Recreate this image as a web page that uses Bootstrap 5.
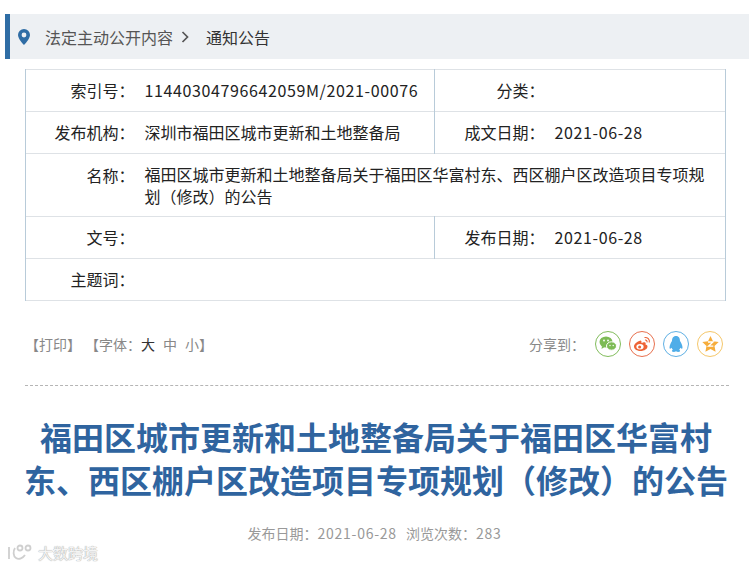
<!DOCTYPE html>
<html lang="zh-CN">
<head>
<meta charset="utf-8">
<title>通知公告</title>
<link rel="stylesheet" href="https://cdn.jsdelivr.net/npm/bootstrap@5.3.0/dist/css/bootstrap.min.css">
<style>
html,body{height:568px;overflow:hidden}
body{font-family:"Microsoft YaHei","Noto Sans CJK SC","Liberation Sans",sans-serif;background:#fff;color:#333;padding-top:14px;position:relative}
.crumb-bar{margin-left:5px;height:45px;background:#edf0f3;border-left:5px solid #2f6da5;padding-left:8px;font-size:16px;color:#555}
.crumb-bar svg{flex:none}
.crumb-now{color:#333;margin-left:9px}
.crumb-pin{margin-right:15px}
.meta-wrap{margin:10px 24px 0 25px}
.meta-table{margin:0;table-layout:fixed;width:700px;font-size:16px;line-height:22px;color:#222}
.meta-table td{padding:0 0 2px;vertical-align:middle;border-color:#b8cbd9}
.meta-table tr{height:42px}
.meta-table tr.tall{height:63px}
.meta-table td.cell-lab{padding-right:10px;text-align:right;border-right-width:0}
.meta-table td.cell-val{border-left-width:0;padding-left:0}
.meta-table td.cell-mid{border-left:1px solid #b8cbd9}
.meta-table td.top-lab{vertical-align:top;padding-top:10px}
.meta-table td.cell-long{padding-right:18px;padding-bottom:0}
.latin{letter-spacing:.62px}
.tools{margin:30px 26px 0 25px;height:26px;font-size:14px;color:#888}
.tools .cur{color:#333}
.tool-gap{margin-left:11px}
.size-opt{margin-left:8px}
.share-list{gap:8px;margin-left:10px}
.share-btn{width:26px;height:26px;border-radius:50%;border:1px solid;background:#fff}
.rule{margin:28px 20px 0 25px;border-top:1px dashed #b5b5b5}
.doc-title{margin:29px 21px 0 24px;font-size:32px;line-height:43px;font-weight:700;color:#2f649f;text-align:center}
.doc-info{margin-top:21px;font-size:14px;line-height:22px;color:#999;text-align:center}
.doc-info .latin{letter-spacing:.75px}
.info-gap{margin-left:9px}
.wm{position:absolute;left:7px;top:544px;font-size:15px;line-height:18px;color:#f4f4f4;text-shadow:0 0 1px #aaa,0 0 1px #aaa}
.wm svg{margin-right:5px}
</style>
</head>
<body>
<div class="crumb-bar d-flex align-items-center">
  <svg width="12" height="16" viewBox="0 0 12 16" class="crumb-pin"><path fill="#2f6da5" fill-rule="evenodd" d="M6 0a6 6 0 0 0-6 6c0 4 6 10 6 10s6-6 6-10a6 6 0 0 0-6-6Zm0 3.600a2.400 2.400 0 1 1 0 4.800 2.400 2.400 0 0 1 0-4.800Z"/></svg>
  <span>法定主动公开内容</span>
  <svg width="8" height="12" viewBox="0 0 8 12" class="mx-2"><path d="M1.500 1l5 5-5 5" fill="none" stroke="#555" stroke-width="1.700"/></svg>
  <span class="crumb-now">通知公告</span>
</div>
<div class="meta-wrap">
<table class="table table-bordered meta-table">
  <colgroup><col style="width:119px"><col style="width:290px"><col style="width:120px"><col style="width:171px"></colgroup>
  <tr><td class="cell-lab">索引号：</td><td class="cell-val"><span class="latin">11440304796642059M/2021-00076</span></td><td class="cell-lab cell-mid">分类：</td><td class="cell-val"></td></tr>
  <tr><td class="cell-lab">发布机构：</td><td class="cell-val">深圳市福田区城市更新和土地整备局</td><td class="cell-lab cell-mid">成文日期：</td><td class="cell-val"><span class="latin">2021-06-28</span></td></tr>
  <tr class="tall"><td class="cell-lab top-lab">名称：</td><td colspan="3" class="cell-val cell-long">福田区城市更新和土地整备局关于福田区华富村东、西区棚户区改造项目专项规划（修改）的公告</td></tr>
  <tr><td class="cell-lab">文号：</td><td class="cell-val"></td><td class="cell-lab cell-mid">发布日期：</td><td class="cell-val"><span class="latin">2021-06-28</span></td></tr>
  <tr><td class="cell-lab">主题词：</td><td colspan="3" class="cell-val"></td></tr>
</table>
</div>
<div class="tools d-flex align-items-center justify-content-between">
  <div>【打印】<span class="tool-gap">【字体：</span><span class="cur">大</span><span class="size-opt">中</span><span class="size-opt">小</span>】</div>
  <div class="d-flex align-items-center">
    <span>分享到：</span>
    <div class="d-flex share-list">
      <span class="share-btn d-flex align-items-center justify-content-center" style="border-color:#82bd5c"><svg width="18" height="16" viewBox="0 0 18 16"><ellipse cx="7" cy="6" rx="6.500" ry="5.500" fill="#7dbb55"/><path d="M3 10l-.5 3 3-2z" fill="#7dbb55"/><ellipse cx="12.500" cy="10" rx="5" ry="4.200" fill="#7dbb55" stroke="#fff"/><circle cx="5" cy="4.500" r=".9" fill="#fff"/><circle cx="9" cy="4.500" r=".9" fill="#fff"/><circle cx="11" cy="9.500" r=".7" fill="#fff"/><circle cx="14.200" cy="9.500" r=".7" fill="#fff"/></svg></span>
      <span class="share-btn d-flex align-items-center justify-content-center" style="border-color:#e8704e"><svg width="18" height="16" viewBox="0 0 18 16"><path d="M7.500 4.500C4 5.500 1 8 1 10.500 1 13.500 4.500 15 7.500 15c4 0 7-2.300 7-4.500 0-1.500-1.500-1.800-2-2 .5-1.300.2-3-2.500-2-1 .3-1.500.6-1.500.6s.3-2.800-1-2.600Z" fill="#ee6336"/><ellipse cx="7" cy="10.800" rx="3.600" ry="2.700" fill="#fff"/><circle cx="6.600" cy="11" r="1.500" fill="#ee6336"/><path d="M11.500 1.500c3-.5 5.500 2 4.800 5M12 4c1.500-.2 2.300 1 2 2.300" fill="none" stroke="#ee6336" stroke-width="1.100"/></svg></span>
      <span class="share-btn d-flex align-items-center justify-content-center" style="border-color:#5fb0e4"><svg width="14" height="17" viewBox="0 0 14 17"><path d="M7 0C4 0 3 2.500 3 5 2 6.500.5 9 .5 11.500c0 1.500.8 1.500 2 .3.3.8.8 1.400 1.300 1.900C2.800 14.200 2.500 15 3.500 15.800c1.300.4 2.700 0 3.500-.6.800.6 2.200 1 3.500.6 1-.8.700-1.600-.3-2.100.5-.5 1-1.100 1.300-1.900 1.200 1.200 2 1.200 2-.3C13.500 9 12 6.500 11 5c0-2.500-1-5-4-5Z" fill="#4fade8"/></svg></span>
      <span class="share-btn d-flex align-items-center justify-content-center" style="border-color:#f5c76a"><svg width="17" height="16" viewBox="0 0 17 16"><path d="M8.500 0l2.500 5.300 5.700.7-4.200 4 1.100 5.800-5.100-2.800-5.100 2.800 1.100-5.800-4.200-4 5.700-.7Z" fill="#f6ad3c"/><path d="M6 6h5L6.500 10.200h4.800" fill="none" stroke="#fff" stroke-width="1.300"/></svg></span>
    </div>
  </div>
</div>
<div class="rule"></div>
<h1 class="doc-title">福田区城市更新和土地整备局关于福田区华富村东、西区棚户区改造项目专项规划（修改）的公告</h1>
<div class="doc-info">发布日期：<span class="latin">2021-06-28</span><span class="info-gap">浏览次数：</span><span class="latin">283</span></div>
<div class="wm d-flex align-items-center"><svg width="26" height="18" viewBox="0 0 26 18"><g fill="none" stroke="#cfcfcf" stroke-width="1.800"><path d="M2 3v12M8 4c-2 3-2 8 1 10 3 2 7 0 9-3"/><circle cx="13" cy="4" r="2.500"/><circle cx="21" cy="4" r="2.500"/></g></svg>大数跨境</div>
<script src="https://cdn.jsdelivr.net/npm/bootstrap@5.3.0/dist/js/bootstrap.bundle.min.js"></script>
</body>
</html>
